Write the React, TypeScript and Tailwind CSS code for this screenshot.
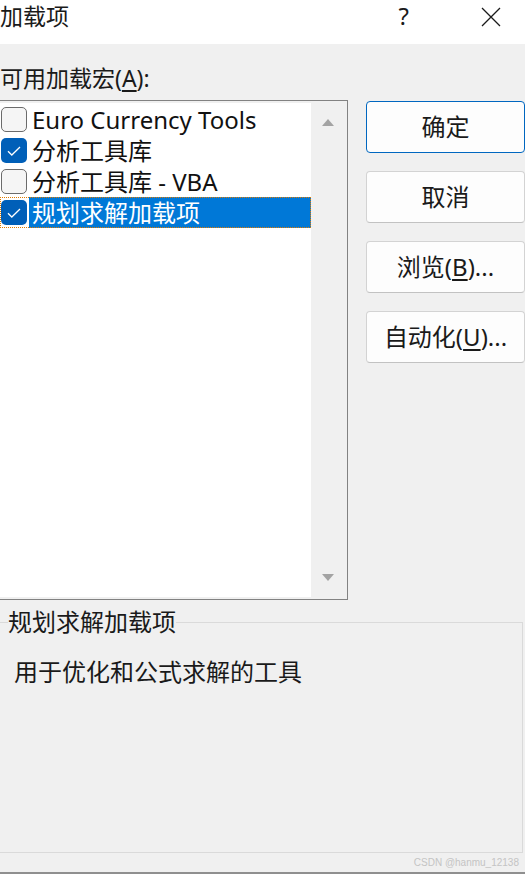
import React from 'react';

const font = { fontFamily: '"Noto Sans", "Noto Sans CJK SC", sans-serif' };

const addins = [
  { name: 'Euro Currency Tools', checked: false },
  { name: '分析工具库', checked: true },
  { name: '分析工具库 - VBA', checked: false },
  { name: '规划求解加载项', checked: true },
];

const Check = ({ checked }: { checked: boolean }) =>
  checked ? (
    <span className="flex h-[25px] w-[26px] shrink-0 items-center justify-center rounded-[5px] bg-[#005fb8]">
      <svg width="14" height="10" viewBox="0 0 14 10" fill="none">
        <path d="M1 5.2 L4.8 9 L13 1" stroke="#ffffff" strokeWidth="1.3" />
      </svg>
    </span>
  ) : (
    <span className="block h-[25px] w-[26px] shrink-0 rounded-[5px] border-[1.5px] border-[#6b6b6b] bg-[#f5f5f5]"></span>
  );

const Btn = ({ children, primary }: { children: React.ReactNode; primary?: boolean }) => (
  <button
    className={`h-[52px] w-[159px] rounded-[4px] border bg-[#fdfdfd] text-[24px] text-[#1a1a1a] ${
      primary ? 'border-[#0067c0]' : 'border-[#d3d3d3] border-b-[#c2c2c2]'
    }`}
  >
    {children}
  </button>
);

export default function App() {
  return (
    <div className="flex h-[874px] w-[525px] flex-col overflow-hidden bg-[#f0f0f0]" style={font}>
      {/* Title bar */}
      <div className="flex h-[44px] shrink-0 items-start bg-white pt-[1px]">
        <span className="text-[23px] leading-[30px] text-[#1a1a1a]">加载项</span>
        <span className="ml-auto mr-[72px] text-[24px] leading-[30px] text-[#1a1a1a]">?</span>
        <svg className="mr-[24px] mt-[6px]" width="20" height="20" viewBox="0 0 20 20">
          <path d="M1 1 L19 19 M19 1 L1 19" stroke="#1a1a1a" strokeWidth="1.3" />
        </svg>
      </div>

      <div className="mt-[20px] h-[28px] text-[23px] leading-[28px] text-[#1a1a1a]">
        可用加载宏(<span className="underline underline-offset-[3px]">A</span>):
      </div>

      <div className="mt-[8px] flex items-start">
        {/* Add-in list */}
        <div className="flex h-[500px] w-[348px] border border-l-0 border-[#828282] p-[2px] pl-0">
          <div className="flex-1 bg-white pt-[1px]">
            {addins.map((a, i) => {
              const sel = i === 3;
              return (
                <div
                  key={a.name}
                  className={`flex h-[31px] items-center ${sel ? 'outline-1 -outline-offset-1 outline-dotted outline-[#e07b00]' : ''}`}
                >
                  <span className="block pl-[1px]">
                    <Check checked={a.checked} />
                  </span>
                  <span
                    className={`ml-[2px] flex h-full flex-1 items-center pl-[3px] text-[24px] ${
                      sel ? 'bg-[#0078d7] text-white' : 'text-[#111111]'
                    }`}
                  >
                    {a.name}
                  </span>
                </div>
              );
            })}
          </div>
          <div className="flex w-[34px] flex-col items-center justify-between py-[16px]">
            <svg width="12" height="7" viewBox="0 0 12 7">
              <path d="M6 0 L12 7 L0 7 Z" fill="#a3a3a3" />
            </svg>
            <svg width="12" height="7" viewBox="0 0 12 7">
              <path d="M0 0 L12 0 L6 7 Z" fill="#a3a3a3" />
            </svg>
          </div>
        </div>

        {/* Buttons */}
        <div className="ml-[18px] flex flex-col gap-[18px] pt-[1px]">
          <Btn primary>确定</Btn>
          <Btn>取消</Btn>
          <Btn>
            浏览(<span className="underline underline-offset-[3px]">B</span>)...
          </Btn>
          <Btn>
            自动化(<span className="underline underline-offset-[3px]">U</span>)...
          </Btn>
        </div>
      </div>

      {/* Description group */}
      <fieldset className="mt-[8px] mr-[2px] h-[245px] border border-l-0 border-[#dadada] pl-[14px]">
        <legend className="-ml-[6px] text-[24px] leading-[28px] text-[#1a1a1a]">规划求解加载项</legend>
        <p className="mt-[18px] text-[24px] text-[#1a1a1a]">用于优化和公式求解的工具</p>
      </fieldset>

      <div
        className="flex flex-1 items-center justify-end pr-[6px] text-[10px] text-[#c4c4c4]"
        style={{ fontFamily: '"Liberation Sans", sans-serif' }}
      >
        CSDN @hanmu_12138
      </div>
      <div className="h-[2px] shrink-0 bg-[#8f8f8f]"></div>
    </div>
  );
}
